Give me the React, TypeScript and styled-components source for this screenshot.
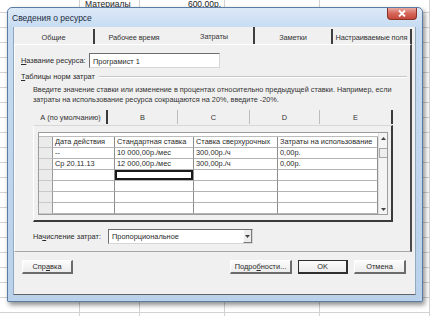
import React from 'react';
import styled, { createGlobalStyle } from 'styled-components';

const GlobalStyle = createGlobalStyle`
  html, body {
    margin: 0;
    padding: 0;
    background: #ffffff;
  }
  body {
    width: 430px;
    height: 316px;
    overflow: hidden;
    font-family: "Liberation Sans", Arial, sans-serif;
  }
`;

const UI_FONT = `7.4px "Liberation Sans", Arial, sans-serif`;

// ---------- excel sheet behind the dialog ----------

const Sheet = styled.div`
  position: relative;
  width: 430px;
  height: 316px;
  overflow: hidden;
  background: #ffffff;
`;

const SheetGrid = styled.div`
  display: grid;
  grid-template-columns: 80px 60px 85px 95px 110px;
  grid-auto-rows: 15px;
  margin-top: -2px;
`;

const SheetCell = styled.div<{ $right?: boolean }>`
  box-sizing: border-box;
  border-right: 1px solid #d2d2d2;
  border-bottom: 1px solid #d2d2d2;
  display: flex;
  align-items: flex-end;
  justify-content: ${p => (p.$right ? 'flex-end' : 'flex-start')};
  padding: 0 3px 3px 5px;
  font: 8.5px "Liberation Sans", Arial, sans-serif;
  line-height: 9px;
  color: #1e1e1e;
  white-space: nowrap;
`;

// ---------- window frame ----------

const Dialog = styled.div`
  position: absolute;
  left: 7px;
  top: 7px;
  width: 416px;
  height: 295px;
  box-sizing: border-box;
  border: 1px solid #5a7ca3;
  border-radius: 5px 5px 1px 1px;
  background: linear-gradient(to bottom, #dce9f7 0px, #c6dbf1 20px, #b9d1ea 100%);
  box-shadow: 2px 3px 5px rgba(0, 0, 0, 0.45);
  padding: 0 6px 6px 5px;
  display: flex;
  flex-direction: column;
`;

const TitleBar = styled.div`
  height: 19px;
  display: flex;
  align-items: flex-start;
`;

const Title = styled.div`
  margin: 5px 0 0 -1px;
  font: 8.5px "Liberation Sans", Arial, sans-serif;
  color: #1b2b40;
  white-space: nowrap;
`;

const CloseButton = styled.div`
  margin-left: auto;
  margin-right: -1px;
  width: 30px;
  height: 12px;
  box-sizing: border-box;
  border: 1px solid #8a3128;
  border-top: none;
  border-radius: 0 0 4px 4px;
  background: linear-gradient(to bottom, #e9a99f 0%, #d6665a 50%, #c4483a 100%);
  display: flex;
  align-items: center;
  justify-content: center;
`;

const Client = styled.div`
  flex: 1;
  background: #f0f0f0;
  border: 1px solid #92a8c2;
  border-top: none;
  border-bottom: 1px solid #646464;
  display: flex;
  flex-direction: column;
  font: ${UI_FONT};
  color: #2a2a2a;
`;

// ---------- main tabs ----------

const TabStrip = styled.div`
  height: 17px;
  display: flex;
`;

const Tab = styled.div<{ $width: number; $edge: boolean; $active?: boolean }>`
  box-sizing: border-box;
  width: ${p => p.$width}px;
  display: flex;
  align-items: center;
  justify-content: center;
  padding-top: 1px;
  border-right: 2px solid ${p => (p.$edge ? '#3e3e3e' : 'transparent')};
  margin-top: ${p => (p.$active ? 0 : 2)}px;
  white-space: nowrap;
  letter-spacing: -0.1px;
  color: #333;
`;

const Page = styled.div`
  box-sizing: border-box;
  width: 398px;
  height: 208px;
  border-top: 1px solid #ffffff;
  border-left: 1px solid #ffffff;
  border-right: 2px solid #4a4a4a;
  border-bottom: 1px solid #a6a6a6;
  display: flex;
  flex-direction: column;
`;

const NameRow = styled.div`
  display: flex;
  align-items: center;
  margin: 8px 0 0 6px;
`;

const Label = styled.div<{ $width: number }>`
  width: ${p => p.$width}px;
  white-space: nowrap;
  color: #2a2a2a;
`;

const TextBox = styled.div`
  box-sizing: border-box;
  width: 131px;
  height: 15px;
  background: #ffffff;
  border: 1px solid #d6d6d6;
  border-top-color: #6e6e6e;
  border-left-color: #6e6e6e;
  padding: 1px 0 0 3px;
  display: flex;
  align-items: center;
  white-space: nowrap;
`;

const GroupHeader = styled.div`
  display: flex;
  align-items: center;
  gap: 4px;
  height: 9px;
  margin: 4px 3px 0 6px;
`;

const GroupLine = styled.div`
  flex: 1;
  height: 0;
  border-top: 1px solid #c6c6c6;
  border-bottom: 1px solid #ffffff;
`;

const Hint = styled.div`
  margin: 4px 0 0 18px;
  font-size: 7.3px;
  line-height: 9.5px;
  color: #333;
  white-space: nowrap;
`;

const InnerTabStrip = styled.div`
  display: flex;
  height: 16px;
  margin: 5px 0 0 20px;
`;

const InnerTab = styled.div<{ $width: number; $tone: 'dark' | 'light' }>`
  box-sizing: border-box;
  width: ${p => p.$width}px;
  display: flex;
  align-items: center;
  justify-content: center;
  border-right: ${p => (p.$tone === 'dark' ? '2px solid #3a3a3a' : '1px solid #bdbdbd')};
  margin: 1px 0 1px 0;
  white-space: nowrap;
  color: #333;
`;

const InnerPage = styled.div`
  box-sizing: border-box;
  width: 360px;
  height: 97px;
  margin-left: 18px;
  border-top: 1px solid #d8d8d8;
  border-left: 1px solid #ffffff;
  border-right: 2px solid #3a3a3a;
  border-bottom: 2px solid #3a3a3a;
  padding: 6px 0 0 4px;
`;

// ---------- data grid ----------

const Grid = styled.div`
  box-sizing: border-box;
  width: 350px;
  height: 83px;
  border: 1px solid #9c9c9c;
  background: #ffffff;
  display: flex;
  overflow: hidden;
`;

const GridBody = styled.div`
  flex: 1;
  display: flex;
  flex-direction: column;
`;

const EditStrip = styled.div`
  box-sizing: border-box;
  height: 10px;
  border-bottom: 1px solid #bcbcbc;
`;

const Table = styled.div`
  display: grid;
  grid-template-columns: 14px 62px 79px 84px 100px;
  grid-auto-rows: 11px;
`;

const Cell = styled.div<{ $selected?: boolean }>`
  box-sizing: border-box;
  border-right: 1px solid #8e8e8e;
  border-bottom: 1px solid #b4b4b4;
  padding: 0 0 0 2px;
  font-size: 7.4px;
  line-height: 10px;
  white-space: nowrap;
  overflow: hidden;
  color: #2a2a2a;
  box-shadow: ${p => (p.$selected ? 'inset 0 0 0 2px #1a1a1a' : 'none')};
`;

const RowHead = styled.div`
  box-sizing: border-box;
  background: #ebebeb;
  border-right: 1px solid #9a9a9a;
  border-bottom: 1px solid #c9c9c9;
`;

const ScrollBar = styled.div`
  width: 9px;
  display: flex;
  flex-direction: column;
  align-items: center;
  background: #f4f4f4;
  border-left: 1px solid #e0e0e0;
`;

const ScrollArrow = styled.div`
  height: 10px;
  width: 100%;
  display: flex;
  align-items: center;
  justify-content: center;
`;

const ScrollThumb = styled.div`
  box-sizing: border-box;
  width: 9px;
  height: 10px;
  margin-top: 5px;
  background: #eeeeee;
  border: 1px solid #a8a8a8;
`;

const ScrollSpacer = styled.div`
  flex: 1;
`;

// ---------- accrual row ----------

const AccrualRow = styled.div`
  display: flex;
  align-items: center;
  margin: 7px 0 0 18px;
`;

const Select = styled.div`
  box-sizing: border-box;
  width: 145px;
  height: 15px;
  background: #ffffff;
  border: 1px solid #d6d6d6;
  border-top-color: #6e6e6e;
  border-left-color: #6e6e6e;
  display: flex;
  align-items: center;
  padding-left: 3px;
`;

const SelectText = styled.div`
  flex: 1;
  white-space: nowrap;
`;

const SelectButton = styled.div`
  box-sizing: border-box;
  width: 9px;
  height: 100%;
  background: #ededed;
  border-left: 1px solid #ffffff;
  border-right: 1px solid #7a7a7a;
  border-bottom: 1px solid #7a7a7a;
  display: flex;
  align-items: center;
  justify-content: center;
`;

// ---------- dialog buttons ----------

const ButtonRow = styled.div`
  display: flex;
  align-items: center;
  margin-top: 8px;
  padding: 0 9px 0 8px;
`;

const ButtonGroup = styled.div`
  margin-left: auto;
  display: flex;
  gap: 6px;
`;

const Button = styled.div<{ $width: number; $default?: boolean }>`
  box-sizing: border-box;
  width: ${p => p.$width}px;
  height: 14px;
  display: flex;
  align-items: center;
  justify-content: center;
  background: linear-gradient(to bottom, #fbfbfb, #ececec);
  border: 1px solid ${p => (p.$default ? '#2e2e2e' : '#ffffff')};
  border-right: 2px solid ${p => (p.$default ? '#2e2e2e' : '#6b6b6b')};
  border-bottom: 2px solid ${p => (p.$default ? '#2e2e2e' : '#6b6b6b')};
  white-space: nowrap;
  color: #2a2a2a;
`;

// ---------- data ----------

const mainTabs = [
  { label: 'Общие', width: 81, edge: true },
  { label: 'Рабочее время', width: 80, edge: false },
  { label: 'Затраты', width: 80, edge: true, active: true },
  { label: 'Заметки', width: 78, edge: true },
  { label: 'Настраиваемые поля', width: 79, edge: true },
];

const rateTabs: { label: string; width: number; tone: 'dark' | 'light' }[] = [
  { label: 'А (по умолчанию)', width: 73, tone: 'dark' },
  { label: 'B', width: 70, tone: 'light' },
  { label: 'C', width: 72, tone: 'light' },
  { label: 'D', width: 70, tone: 'light' },
  { label: 'E', width: 73, tone: 'dark' },
];

const header = ['Дата действия', 'Стандартная ставка', 'Ставка сверхурочных', 'Затраты на использование'];

const rows = [
  ['--', '10 000,00р./мес', '300,00р./ч', '0,00р.'],
  ['Ср 20.11.13', '12 000,00р./мес', '300,00р./ч', '0,00р.'],
  ['', '', '', ''],
  ['', '', '', ''],
  ['', '', '', ''],
  ['', '', '', ''],
];

const Arrow = ({ up }: { up?: boolean }) => (
  <svg width="5" height="3" viewBox="0 0 5 3">
    <path d={up ? 'M0 3 L2.5 0 L5 3 Z' : 'M0 0 L2.5 3 L5 0 Z'} fill="#444" />
  </svg>
);

const App = () => {
  const sheetRows = Array.from({ length: 22 }, (_, r) => r);

  return (
    <>
      <GlobalStyle />
      <Sheet>
        <SheetGrid>
          {sheetRows.map(r => (
            <React.Fragment key={r}>
              <SheetCell />
              <SheetCell>{r === 0 ? 'Материалы' : ''}</SheetCell>
              <SheetCell $right>{r === 0 ? '600,00р.' : ''}</SheetCell>
              <SheetCell />
              <SheetCell />
            </React.Fragment>
          ))}
        </SheetGrid>

        <Dialog>
          <TitleBar>
            <Title>Сведения о ресурсе</Title>
            <CloseButton>
              <svg width="8" height="7" viewBox="0 0 8 7">
                <path d="M1 0.5 L7 6.5 M7 0.5 L1 6.5" stroke="#ffffff" strokeWidth="1.8" />
              </svg>
            </CloseButton>
          </TitleBar>

          <Client>
            <TabStrip>
              {mainTabs.map(t => (
                <Tab key={t.label} $width={t.width} $edge={t.edge} $active={t.active}>
                  {t.label}
                </Tab>
              ))}
            </TabStrip>

            <Page>
              <NameRow>
                <Label $width={68}>
                  <u>Н</u>азвание ресурса:
                </Label>
                <TextBox>Програмист 1</TextBox>
              </NameRow>

              <GroupHeader>
                <span>
                  <u>Т</u>аблицы норм затрат
                </span>
                <GroupLine />
              </GroupHeader>

              <Hint>
                Введите значение ставки или изменение в процентах относительно предыдущей ставки. Например, если
                <br />
                затраты на использование ресурса сокращаются на 20%, введите -20%.
              </Hint>

              <InnerTabStrip>
                {rateTabs.map(t => (
                  <InnerTab key={t.label} $width={t.width} $tone={t.tone}>
                    {t.label}
                  </InnerTab>
                ))}
              </InnerTabStrip>

              <InnerPage>
                <Grid>
                  <GridBody>
                    <EditStrip />
                    <Table>
                      <RowHead />
                      {header.map(h => (
                        <Cell key={h}>{h}</Cell>
                      ))}
                      {rows.map((row, i) => (
                        <React.Fragment key={i}>
                          <RowHead />
                          {row.map((value, j) => (
                            <Cell key={j} $selected={i === 2 && j === 1}>
                              {value}
                            </Cell>
                          ))}
                        </React.Fragment>
                      ))}
                    </Table>
                  </GridBody>
                  <ScrollBar>
                    <ScrollArrow>
                      <Arrow up />
                    </ScrollArrow>
                    <ScrollThumb />
                    <ScrollSpacer />
                    <ScrollArrow>
                      <Arrow />
                    </ScrollArrow>
                  </ScrollBar>
                </Grid>
              </InnerPage>

              <AccrualRow>
                <Label $width={75}>
                  На<u>ч</u>исление затрат:
                </Label>
                <Select>
                  <SelectText>Пропорциональное</SelectText>
                  <SelectButton>
                    <Arrow />
                  </SelectButton>
                </Select>
              </AccrualRow>
            </Page>

            <ButtonRow>
              <Button $width={51}>
                Спр<u>а</u>вка
              </Button>
              <ButtonGroup>
                <Button $width={62}>
                  Подро<u>б</u>ности...
                </Button>
                <Button $width={50} $default>
                  OK
                </Button>
                <Button $width={52}>Отмена</Button>
              </ButtonGroup>
            </ButtonRow>
          </Client>
        </Dialog>
      </Sheet>
    </>
  );
};

export default App;
